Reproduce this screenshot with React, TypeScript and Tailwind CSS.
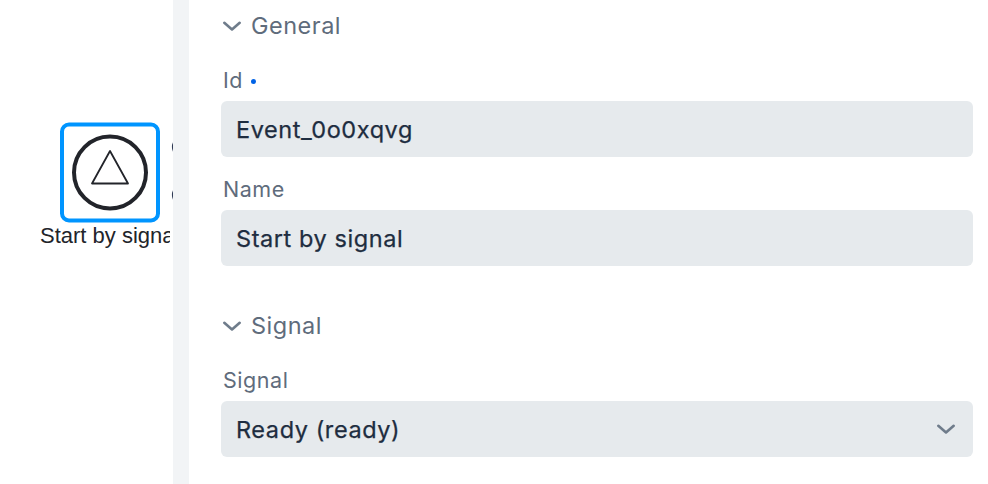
import React from "react";

function Chevron({ className }: { className: string }) {
  return (
    <svg className={className} width="20" height="12" viewBox="0 0 20 12" fill="none" stroke="#6f7c8b" strokeWidth="2.6" strokeLinecap="round" strokeLinejoin="round">
      <path d="M2.3 2.8 L10 9.5 L17.7 2.8" />
    </svg>
  );
}

function SectionHeader({ title }: { title: string }) {
  return (
    <div className="flex h-8 items-center">
      <Chevron className="ml-px shrink-0" />
      <h2 className="ml-[9px] whitespace-nowrap text-[23.5px] leading-8 tracking-[0.5px] text-[#5f6c7c]">{title}</h2>
    </div>
  );
}

function Field({ label, value, required, select }: { label: string; value: string; required?: boolean; select?: boolean }) {
  return (
    <div>
      <div className="flex h-8 items-center pl-[2px] text-[21.5px] leading-8 tracking-[0.55px] text-[#5f6c7c]">
        <span>{label}</span>
        {required && <span className="mt-[3px] ml-2 size-[5px] rounded-full bg-[#0062e6]" />}
      </div>
      <div className="mt-[5px] flex h-14 items-center justify-between rounded-md bg-[#e6eaed] pr-[17px] pl-[15px]">
        <span className="mt-0.5 whitespace-nowrap text-[23.5px] leading-8 tracking-[0.58px] text-[#1e2d40] [-webkit-text-stroke:0.25px_#1e2d40]">{value}</span>
        {select && <Chevron className="shrink-0" />}
      </div>
    </div>
  );
}

export default function App() {
  return (
    <div className="flex h-[484px] w-[988px] overflow-hidden bg-white font-['Inter',sans-serif]">
      <div className="relative w-[173px] shrink-0 overflow-hidden">
        <svg className="absolute inset-0" width="173" height="484" fill="none">
          <rect x="62" y="124.5" width="96" height="96" rx="7" stroke="#0095ff" strokeWidth="4" />
          <circle cx="110" cy="172.5" r="36" stroke="#22242a" strokeWidth="4" />
          <path d="M110 151 L92 183.5 H128 Z" stroke="#22242a" strokeWidth="1.8" strokeLinejoin="round" />
          <circle cx="182.4" cy="147" r="9.5" stroke="#2f3a55" strokeWidth="2" />
          <circle cx="182.4" cy="195" r="9.5" stroke="#2f3a55" strokeWidth="2" />
        </svg>
        <div className="absolute top-[223px] left-[40px] w-[130px] overflow-hidden whitespace-nowrap font-['Liberation_Sans',sans-serif] text-[22px] leading-[26px] text-[#22242a]">
          Start by signal
        </div>
      </div>
      <div className="w-4 shrink-0 bg-[#f2f4f6]" />
      <main className="flex-1 pt-[10px] pr-[15px] pl-8">
        <SectionHeader title="General" />
        <div className="mt-[22px] flex flex-col gap-4">
          <Field label="Id" value="Event_0o0xqvg" required />
          <Field label="Name" value="Start by signal" />
        </div>
        <div className="mt-11">
          <SectionHeader title="Signal" />
          <div className="mt-[22px]">
            <Field label="Signal" value="Ready (ready)" select />
          </div>
        </div>
      </main>
    </div>
  );
}
